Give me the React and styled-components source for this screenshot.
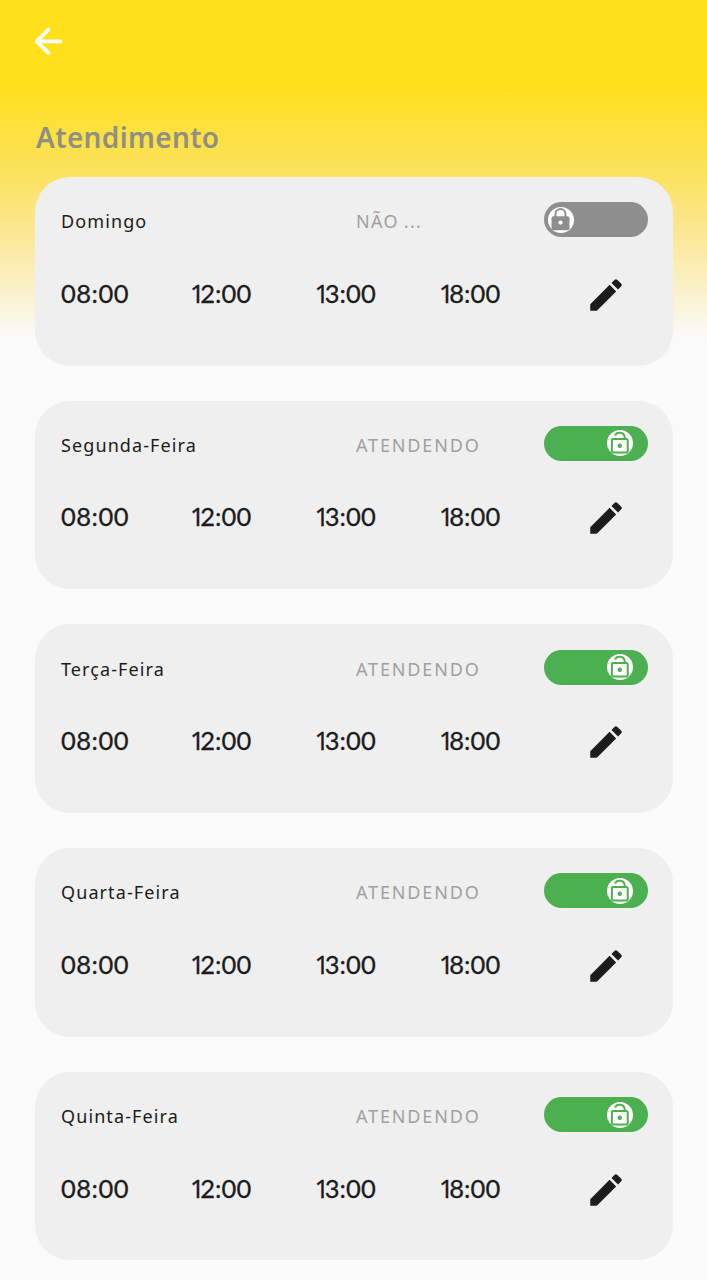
import styled, { createGlobalStyle } from 'styled-components';
import { MdEdit } from 'react-icons/md';

const GlobalStyle = createGlobalStyle`
  * {
    box-sizing: border-box;
  }

  body {
    margin: 0;
    background-color: #fafafa;
    overflow: hidden;
  }
`;

const Screen = styled.main`
  height: 1280px;
  padding: 0 34px 0 35px;
  overflow: hidden;
  background: linear-gradient(#ffe01b 0, #ffe01b 85px, #fbe25f 175px, #fbe9a0 245px, #fafafa 340px);
  font-family: 'Noto Sans', sans-serif;
  color: #1c1c1c;
`;

const Header = styled.header`
  height: 177px;
  padding-top: 27px;
`;

const BackButton = styled.button`
  display: block;
  width: 28px;
  height: 28px;
  padding: 0;
  border: none;
  background: none;
  color: #fff;

  svg {
    display: block;
  }
`;

const Title = styled.h1`
  margin: 62px 0 0 1px;
  font-size: 28px;
  font-weight: 600;
  line-height: 40px;
  letter-spacing: 0.35px;
  color: #8f8f86;
`;

const CardList = styled.section`
  display: flex;
  flex-direction: column;
  gap: 35px;
`;

const Card = styled.article`
  height: 188.7px;
  padding: 25.3px 25.5px 0 26px;
  border-radius: 35px;
  background-color: #efefef;
`;

const CardTop = styled.div`
  display: grid;
  grid-template-columns: 295px 1fr 103.5px;
  height: 35px;
`;

const Day = styled.h2`
  margin: 0;
  font-size: 18px;
  font-weight: 400;
  line-height: 39.400px;
  letter-spacing: 1.1px;
`;

const Status = styled.span`
  font-size: 18px;
  line-height: 39.400px;
  letter-spacing: ${({ $open }) => ($open ? '1.85px' : '1.3px')};
  word-spacing: ${({ $open }) => ($open ? '0' : '-1px')};
  color: #a0a0a0;
`;

const Switch = styled.button`
  display: flex;
  align-items: center;
  justify-content: ${({ $open }) => ($open ? 'flex-end' : 'flex-start')};
  height: 35px;
  padding: 0 ${({ $open }) => ($open ? '15px' : '4px')};
  border: none;
  border-radius: 18px;
  background-color: ${({ $open }) => ($open ? '#4caf50' : '#8e8e8e')};
  color: ${({ $open }) => ($open ? '#4caf50' : '#8e8e8e')};
`;

const Knob = styled.span`
  display: flex;
  align-items: center;
  justify-content: center;
  width: 26px;
  height: 26px;
  border-radius: 50%;
  background-color: #fff;
  overflow: hidden;
`;

const Hours = styled.div`
  display: grid;
  grid-template-columns: 130px 124.5px 124.5px 1fr 42px;
  margin-top: 36.5px;
  padding-right: 21px;
`;

// a leading 1 is a plain stroke without a foot, so it takes less room
const Hour = styled.time`
  margin-left: ${({ $leadingOne }) => ($leadingOne ? '-1px' : '0')};
  font-family: Lato, sans-serif;
  font-size: 25.5px;
  line-height: 39px;
  letter-spacing: ${({ $leadingOne }) => ($leadingOne ? '0.1px' : '0.5px')};
  -webkit-text-stroke: 0.3px #1c1c1c;

  &::first-letter {
    font-family: ${({ $leadingOne }) => ($leadingOne ? "'Noto Sans', sans-serif" : 'Lato, sans-serif')};
    letter-spacing: ${({ $leadingOne }) => ($leadingOne ? '-4.4px' : '0.5px')};
  }
`;

const EditButton = styled.button`
  display: block;
  width: 42px;
  height: 42px;
  padding: 0;
  border: none;
  background: none;
  color: #1c1c1c;

  svg {
    display: block;
  }
`;

const hours = ['08:00', '12:00', '13:00', '18:00'];

const days = [
  { name: 'Domingo', status: 'NÃO ...', open: false },
  { name: 'Segunda-Feira', status: 'ATENDENDO', open: true },
  { name: 'Terça-Feira', status: 'ATENDENDO', open: true },
  { name: 'Quarta-Feira', status: 'ATENDENDO', open: true },
  { name: 'Quinta-Feira', status: 'ATENDENDO', open: true },
];

const ArrowIcon = () => (
  <svg width="28" height="28" viewBox="0 0 28 28" fill="none" stroke="currentColor" strokeWidth="3.8" strokeLinecap="round" strokeLinejoin="round">
    <path d="M13.500 2.500 1.800 14.300l11.700 11.500M2 14.300h23.200" />
  </svg>
);

const LockIcon = () => (
  <svg width="26" height="26" viewBox="0 0 26 26">
    <path d="M7.500 10V7a5 5 0 0 1 10 0v3" fill="none" stroke="currentColor" strokeWidth="2" />
    <rect x="3.500" y="9.300" width="18" height="14" rx="2" fill="currentColor" />
    <circle cx="12.500" cy="15.600" r="2.100" fill="#fff" />
  </svg>
);

const LockOpenIcon = () => (
  <svg width="26" height="26" viewBox="0 0 26 26" fill="none" stroke="currentColor" strokeWidth="2">
    <path d="M8 5.600a5 4.600 0 0 1 9.600 1.400v2" />
    <rect x="4.900" y="9" width="15.800" height="13.600" rx="1" />
    <circle cx="12.800" cy="15.700" r="2.200" fill="currentColor" stroke="none" />
  </svg>
);

const DayCard = ({ name, status, open }) => (
  <Card>
    <CardTop>
      <Day>{name}</Day>
      <Status $open={open}>{status}</Status>
      <Switch type="button" role="switch" aria-checked={open} $open={open}>
        <Knob>{open ? <LockOpenIcon /> : <LockIcon />}</Knob>
      </Switch>
    </CardTop>
    <Hours>
      {hours.map((hour) => (
        <Hour key={hour} $leadingOne={hour.startsWith('1')}>{hour}</Hour>
      ))}
      <EditButton type="button" aria-label="Editar">
        <MdEdit size={42} />
      </EditButton>
    </Hours>
  </Card>
);

const App = () => (
  <>
    <GlobalStyle />
    <Screen>
      <Header>
        <BackButton type="button" aria-label="Voltar">
          <ArrowIcon />
        </BackButton>
        <Title>Atendimento</Title>
      </Header>
      <CardList>
        {days.map((day) => (
          <DayCard key={day.name} {...day} />
        ))}
      </CardList>
    </Screen>
  </>
);

export default App;
